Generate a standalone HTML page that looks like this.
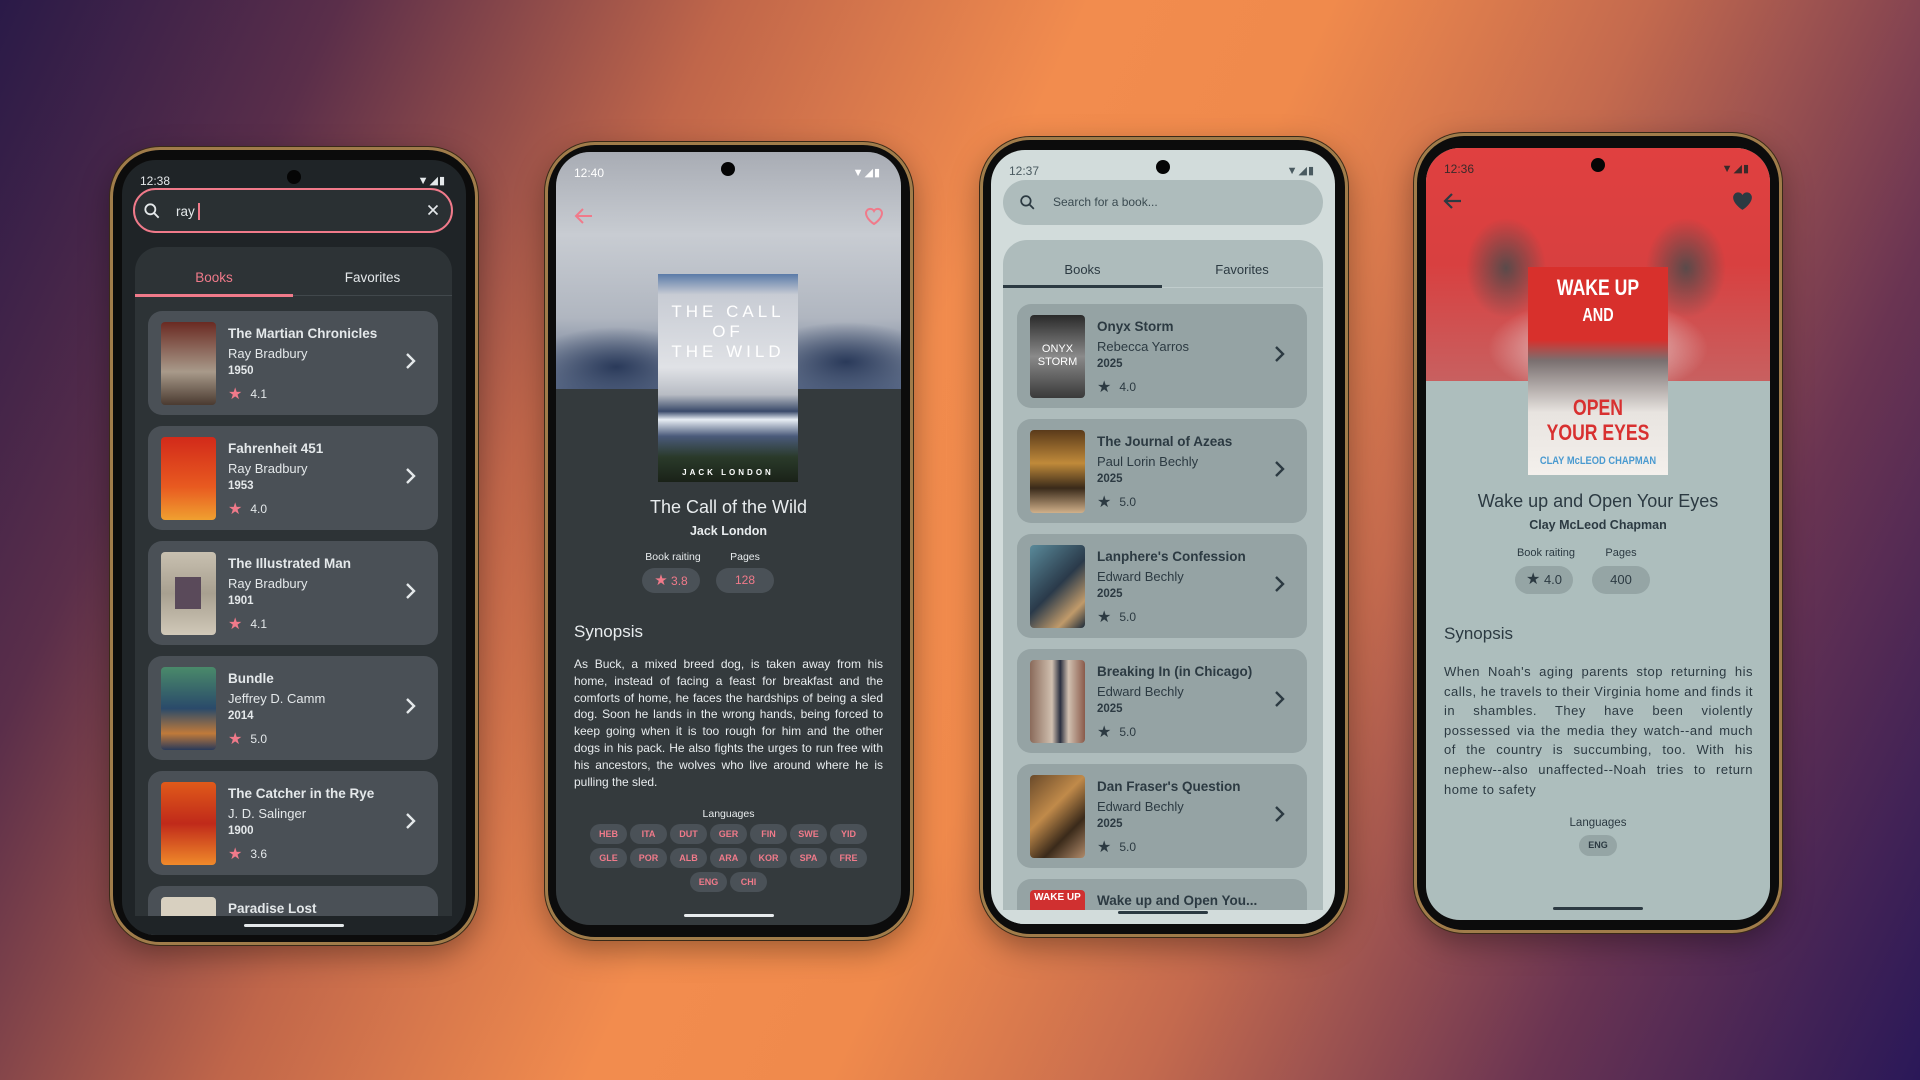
<!DOCTYPE html>
<html><head><meta charset="utf-8"><style>
*{margin:0;padding:0;box-sizing:border-box}
body{width:1920px;height:1080px;overflow:hidden;position:relative;font-family:"Liberation Sans",sans-serif;
background:linear-gradient(115deg,#2a1a48 0%,#5a2e4a 14%,#c0664a 30%,#f28c4e 45%,#f08a4c 55%,#c46a4e 68%,#6a3452 84%,#2a1858 100%);}
.frame{position:absolute;border-radius:50px;background:#0c0c0c;border:3px solid #a07c4a;box-shadow:0 0 0 1px #3a2a18,0 10px 30px rgba(0,0,0,.35)}
.scr{position:absolute;border-radius:34px;overflow:hidden}
.a{position:absolute}
.cam{position:absolute;width:14px;height:14px;border-radius:50%;background:#050505;left:165px;top:10px}
.st{position:absolute;top:14px;left:18px;font-size:12px}
.sti{position:absolute;top:14px;right:20px;font-size:11px;letter-spacing:1px}
.card{position:absolute;left:26px;width:290px;height:104px;border-radius:14px}
.cov{position:absolute;left:13px;top:11px;width:55px;height:83px;border-radius:4px;overflow:hidden}
.t1{position:absolute;left:80px;top:15px;font-size:13.5px;font-weight:bold;white-space:nowrap}
.t2{position:absolute;left:80px;top:35px;font-size:13px;white-space:nowrap}
.t3{position:absolute;left:80px;top:54px;font-size:11.5px;font-weight:bold}
.t4{position:absolute;left:80px;top:72px;font-size:12px}
.t4 b{font-size:16px;font-weight:normal;margin-right:8px;position:relative;top:1px}
.chev{position:absolute;left:250px;top:38px;width:24px;height:24px}
.home{position:absolute;bottom:8px;left:122px;width:100px;height:3px;border-radius:2px}
.chip{display:inline-block;width:37px;height:20px;border-radius:10px;font-size:9px;font-weight:bold;text-align:center;line-height:20px;margin:2px 1.5px}
.syn{position:absolute;left:18px;width:309px;font-size:12px;line-height:16.8px;text-align:justify}
</style></head><body>

<!-- PHONE 1 -->
<div class="frame" style="left:110px;top:147px;width:368px;height:798px"></div>
<div class="scr" style="left:122px;top:160px;width:344px;height:775px;background:#1f2427;color:#e4e8ea">
 <div class="cam"></div>
 <div class="st">12:38</div><div class="sti">▼◢▮</div>
 <div class="a" style="left:11px;top:28px;width:320px;height:45px;border:2px solid #f07a8a;border-radius:23px;background:#2a3033"></div>
 <svg class="a" style="left:20px;top:41px" width="20" height="20" viewBox="0 0 24 24"><circle cx="10" cy="10" r="6" stroke="#e4e8ea" stroke-width="2.2" fill="none"/><path d="M14.5 14.5L20 20" stroke="#e4e8ea" stroke-width="2.2"/></svg>
 <div class="a" style="left:54px;top:43px;font-size:13.5px">ray<span style="display:inline-block;width:2px;height:17px;background:#f07a8a;vertical-align:-4px;margin-left:3px"></span></div>
 <svg class="a" style="left:302px;top:41px" width="18" height="18" viewBox="0 0 24 24"><path d="M6 6L18 18M18 6L6 18" stroke="#e4e8ea" stroke-width="2.2"/></svg>
 <div class="a" style="left:13px;top:87px;width:317px;height:720px;background:#2d3336;border-radius:24px"></div>
 <div class="a" style="left:13px;top:110px;width:158px;text-align:center;font-size:13.5px;color:#f07a8a">Books</div>
 <div class="a" style="left:171px;top:110px;width:159px;text-align:center;font-size:13.5px">Favorites</div>
 <div class="a" style="left:13px;top:135px;width:317px;height:1px;background:#41484c"></div>
 <div class="a" style="left:13px;top:134px;width:158px;height:3px;background:#f07a8a"></div>

 <div class="card" style="top:151px;background:#4a5056"><div class="cov" style="background:linear-gradient(#6a2a22,#a89a8a 60%,#4a3a30)"></div><div class="t1">The Martian Chronicles</div><div class="t2">Ray Bradbury</div><div class="t3">1950</div><div class="t4"><b style="color:#f07a8a">★</b>4.1</div><svg class="chev" viewBox="0 0 24 24"><path d="M9 5l7 7-7 7" stroke="#e4e8ea" stroke-width="2.4" fill="none"/></svg></div>
 <div class="card" style="top:266px;background:#4a5056"><div class="cov" style="background:linear-gradient(#d22a1a,#e85a20 60%,#f0a030)"></div><div class="t1">Fahrenheit 451</div><div class="t2">Ray Bradbury</div><div class="t3">1953</div><div class="t4"><b style="color:#f07a8a">★</b>4.0</div><svg class="chev" viewBox="0 0 24 24"><path d="M9 5l7 7-7 7" stroke="#e4e8ea" stroke-width="2.4" fill="none"/></svg></div>
 <div class="card" style="top:381px;background:#4a5056"><div class="cov" style="background:linear-gradient(#c8c0b0,#a8a090 50%,#d0c8b8)"><div style="margin:25px 14px;width:26px;height:32px;background:#5a4a5a"></div></div><div class="t1">The Illustrated Man</div><div class="t2">Ray Bradbury</div><div class="t3">1901</div><div class="t4"><b style="color:#f07a8a">★</b>4.1</div><svg class="chev" viewBox="0 0 24 24"><path d="M9 5l7 7-7 7" stroke="#e4e8ea" stroke-width="2.4" fill="none"/></svg></div>
 <div class="card" style="top:496px;background:#4a5056"><div class="cov" style="background:linear-gradient(#4a8a6a,#2a4a6a 50%,#c07a3a 80%,#2a3a5a)"></div><div class="t1">Bundle</div><div class="t2">Jeffrey D. Camm</div><div class="t3">2014</div><div class="t4"><b style="color:#f07a8a">★</b>5.0</div><svg class="chev" viewBox="0 0 24 24"><path d="M9 5l7 7-7 7" stroke="#e4e8ea" stroke-width="2.4" fill="none"/></svg></div>
 <div class="card" style="top:611px;background:#4a5056"><div class="cov" style="background:linear-gradient(#e05a1a,#c02a1a 50%,#f08a2a)"></div><div class="t1">The Catcher in the Rye</div><div class="t2">J. D. Salinger</div><div class="t3">1900</div><div class="t4"><b style="color:#f07a8a">★</b>3.6</div><svg class="chev" viewBox="0 0 24 24"><path d="M9 5l7 7-7 7" stroke="#e4e8ea" stroke-width="2.4" fill="none"/></svg></div>
 <div class="card" style="top:726px;background:#4a5056"><div class="cov" style="background:#d8d0c0"></div><div class="t1">Paradise Lost</div></div>
 <div class="a" style="left:0;top:756px;width:344px;height:20px;background:#1f2427"></div>
 <div class="home" style="background:#e4e8ea"></div>
</div>

<!-- PHONE 2 -->
<div class="frame" style="left:545px;top:142px;width:368px;height:798px"></div>
<div class="scr" style="left:556px;top:152px;width:345px;height:773px;background:#343a3d;color:#e8ecee">
 <div class="a" style="left:0;top:0;width:345px;height:237px;background:radial-gradient(ellipse 90px 40px at 60px 215px,#2a3a5a,transparent),radial-gradient(ellipse 90px 40px at 290px 210px,#2a3a5a,transparent),linear-gradient(#a8acb4,#c8ccd2 35%,#b0b6c0 70%,#5a6a88)"></div>
 <div class="cam"></div>
 <div class="st" style="color:#fff">12:40</div><div class="sti" style="color:#fff">▼◢▮</div>
 <svg class="a" style="left:16px;top:52px" width="24" height="24" viewBox="0 0 24 24"><path d="M20 12H5M11 5l-7 7 7 7" stroke="#f07a8a" stroke-width="2" fill="none"/></svg>
 <svg class="a" style="left:306px;top:52px" width="24" height="24" viewBox="0 0 24 24"><path d="M12 20s-8-5-8-11a4.3 4.3 0 0 1 8-2 4.3 4.3 0 0 1 8 2c0 6-8 11-8 11z" stroke="#f07a8a" stroke-width="2" fill="none"/></svg>
 <div class="a" style="left:102px;top:122px;width:140px;height:208px;background:linear-gradient(#5a7aa8 0%,#c8ccd4 10%,#e0e2e6 45%,#b8bcc4 58%,#3a4a6a 66%,#e8eef4 70%,#4a5a7a 78%,#2a3a2a 88%,#1a2218 100%)">
  <div style="position:absolute;top:28px;width:140px;text-align:center;color:#fff;font-size:17px;letter-spacing:4px;line-height:20px">THE CALL<br>OF<br>THE WILD</div>
  <div style="position:absolute;top:194px;width:140px;text-align:center;color:#fff;font-size:8px;font-weight:bold;letter-spacing:3px">JACK LONDON</div></div>
 <div class="a" style="left:0;top:345px;width:345px;text-align:center;font-size:18px">The Call of the Wild</div>
 <div class="a" style="left:0;top:372px;width:345px;text-align:center;font-size:12.5px;font-weight:bold">Jack London</div>
 <div class="a" style="left:84px;top:399px;width:66px;text-align:center;font-size:10.5px">Book raiting</div>
 <div class="a" style="left:158px;top:399px;width:62px;text-align:center;font-size:10.5px">Pages</div>
 <div class="a" style="left:86px;top:416px;width:58px;height:25px;border-radius:13px;background:#4a5157;color:#f07a8a;font-size:12px;text-align:center;line-height:25px"><span style="font-size:15px">★</span> 3.8</div>
 <div class="a" style="left:160px;top:416px;width:58px;height:25px;border-radius:13px;background:#4a5157;color:#f07a8a;font-size:12px;text-align:center;line-height:25px">128</div>
 <div class="a" style="left:18px;top:470px;font-size:17px">Synopsis</div>
 <div class="syn" style="top:504px">As Buck, a mixed breed dog, is taken away from his home, instead of facing a feast for breakfast and the comforts of home, he faces the hardships of being a sled dog. Soon he lands in the wrong hands, being forced to keep going when it is too rough for him and the other dogs in his pack. He also fights the urges to run free with his ancestors, the wolves who live around where he is pulling the sled.</div>
 <div class="a" style="left:0;top:656px;width:345px;text-align:center;font-size:10.5px">Languages</div>
 <div class="a" style="left:25px;top:670px;width:295px;text-align:center;color:#f07a8a;line-height:0">
  <span class="chip" style="background:#4a5157">HEB</span><span class="chip" style="background:#4a5157">ITA</span><span class="chip" style="background:#4a5157">DUT</span><span class="chip" style="background:#4a5157">GER</span><span class="chip" style="background:#4a5157">FIN</span><span class="chip" style="background:#4a5157">SWE</span><span class="chip" style="background:#4a5157">YID</span><br>
  <span class="chip" style="background:#4a5157">GLE</span><span class="chip" style="background:#4a5157">POR</span><span class="chip" style="background:#4a5157">ALB</span><span class="chip" style="background:#4a5157">ARA</span><span class="chip" style="background:#4a5157">KOR</span><span class="chip" style="background:#4a5157">SPA</span><span class="chip" style="background:#4a5157">FRE</span><br>
  <span class="chip" style="background:#4a5157">ENG</span><span class="chip" style="background:#4a5157">CHI</span></div>
 <div class="home" style="background:#e8ecee;width:90px;left:128px"></div>
</div>

<!-- PHONE 3 -->
<div class="frame" style="left:980px;top:137px;width:368px;height:800px"></div>
<div class="scr" style="left:991px;top:150px;width:344px;height:774px;background:#d2dcdb;color:#2c3a42">
 <div class="cam"></div>
 <div class="st" style="color:#4a5a60">12:37</div><div class="sti" style="color:#4a5a60">▼◢▮</div>
 <div class="a" style="left:12px;top:30px;width:320px;height:45px;border-radius:23px;background:#aebcbc"></div>
 <svg class="a" style="left:27px;top:43px" width="19" height="19" viewBox="0 0 24 24"><circle cx="10" cy="10" r="6" stroke="#2c3a42" stroke-width="2.2" fill="none"/><path d="M14.5 14.5L20 20" stroke="#2c3a42" stroke-width="2.2"/></svg>
 <div class="a" style="left:62px;top:45px;font-size:12px;color:#3a4a50">Search for a book...</div>
 <div class="a" style="left:12px;top:90px;width:320px;height:720px;background:#aebcbc;border-radius:24px"></div>
 <div class="a" style="left:12px;top:112px;width:159px;text-align:center;font-size:13px">Books</div>
 <div class="a" style="left:171px;top:112px;width:160px;text-align:center;font-size:13px">Favorites</div>
 <div class="a" style="left:12px;top:137px;width:320px;height:1px;background:#c0cccc"></div>
 <div class="a" style="left:12px;top:135px;width:159px;height:3px;background:#2c3a42"></div>
 <div class="card" style="top:154px;background:#95a3a4"><div class="cov" style="background:linear-gradient(#2a2a2a,#8a8a8a 50%,#3a3a3a)"><div style="color:#fff;font-size:11px;text-align:center;margin-top:28px;line-height:13px">ONYX<br>STORM</div></div><div class="t1">Onyx Storm</div><div class="t2">Rebecca Yarros</div><div class="t3">2025</div><div class="t4"><b>★</b>4.0</div><svg class="chev" viewBox="0 0 24 24"><path d="M9 5l7 7-7 7" stroke="#2c3a42" stroke-width="2.4" fill="none"/></svg></div>
 <div class="card" style="top:269px;background:#95a3a4"><div class="cov" style="background:linear-gradient(#5a3a1a,#c08a3a 40%,#3a2a1a 70%,#d0b08a)"></div><div class="t1">The Journal of Azeas</div><div class="t2">Paul Lorin Bechly</div><div class="t3">2025</div><div class="t4"><b>★</b>5.0</div><svg class="chev" viewBox="0 0 24 24"><path d="M9 5l7 7-7 7" stroke="#2c3a42" stroke-width="2.4" fill="none"/></svg></div>
 <div class="card" style="top:384px;background:#95a3a4"><div class="cov" style="background:linear-gradient(135deg,#5a8a9a,#2a3a4a 50%,#c09a6a 80%,#1a2a3a)"></div><div class="t1">Lanphere's Confession</div><div class="t2">Edward Bechly</div><div class="t3">2025</div><div class="t4"><b>★</b>5.0</div><svg class="chev" viewBox="0 0 24 24"><path d="M9 5l7 7-7 7" stroke="#2c3a42" stroke-width="2.4" fill="none"/></svg></div>
 <div class="card" style="top:499px;background:#95a3a4"><div class="cov" style="background:linear-gradient(90deg,#8a6a5a,#d0c0b0 40%,#2a3040 55%,#d0c0b0 70%,#8a5a4a)"></div><div class="t1">Breaking In (in Chicago)</div><div class="t2">Edward Bechly</div><div class="t3">2025</div><div class="t4"><b>★</b>5.0</div><svg class="chev" viewBox="0 0 24 24"><path d="M9 5l7 7-7 7" stroke="#2c3a42" stroke-width="2.4" fill="none"/></svg></div>
 <div class="card" style="top:614px;background:#95a3a4"><div class="cov" style="background:linear-gradient(135deg,#6a4a2a,#c08a4a 40%,#3a2a1a 70%,#b08a6a)"></div><div class="t1">Dan Fraser's Question</div><div class="t2">Edward Bechly</div><div class="t3">2025</div><div class="t4"><b>★</b>5.0</div><svg class="chev" viewBox="0 0 24 24"><path d="M9 5l7 7-7 7" stroke="#2c3a42" stroke-width="2.4" fill="none"/></svg></div>
 <div class="card" style="top:729px;background:#95a3a4"><div class="cov" style="background:#d03030;color:#fff;font-size:10px;text-align:center;font-weight:bold;padding-top:2px">WAKE UP</div><div class="t1" style="top:14px">Wake up and Open You...</div></div>
 <div class="a" style="left:0;top:760px;width:344px;height:20px;background:#d2dcdb"></div>
 <div class="home" style="background:#2c3a42;width:90px;left:127px;bottom:10px"></div>
</div>

<!-- PHONE 4 -->
<div class="frame" style="left:1414px;top:133px;width:368px;height:800px"></div>
<div class="scr" style="left:1426px;top:148px;width:344px;height:772px;background:#adbebd;color:#2c3a42">
 <div class="a" style="left:0;top:0;width:344px;height:233px;background:radial-gradient(ellipse 110px 50px at 172px 200px,#f0eeee,transparent),radial-gradient(ellipse 40px 50px at 80px 120px,#5a4a4a,transparent),radial-gradient(ellipse 40px 50px at 260px 120px,#5a4a4a,transparent),linear-gradient(#e04040,#d84040 50%,#c86060)"></div>
 <div class="cam"></div>
 <div class="st" style="color:#3a2a2a">12:36</div><div class="sti" style="color:#3a2a2a">▼◢▮</div>
 <svg class="a" style="left:15px;top:41px" width="24" height="24" viewBox="0 0 24 24"><path d="M20 12H5M11 5l-7 7 7 7" stroke="#2c3a42" stroke-width="2.2" fill="none"/></svg>
 <svg class="a" style="left:304px;top:40px" width="25" height="25" viewBox="0 0 24 24"><path d="M12 21s-9-5.5-9-12a4.8 4.8 0 0 1 9-2.3A4.8 4.8 0 0 1 21 9c0 6.5-9 12-9 12z" fill="#2c3a42"/></svg>
 <div class="a" style="left:102px;top:119px;width:140px;height:208px;background:linear-gradient(#d8302c 0%,#d8302c 35%,#7a7070 45%,#e8e4e0 70%,#f4f0ec 100%)">
  <div style="position:absolute;top:8px;width:140px;text-align:center;color:#fff;font-size:22px;font-weight:bold;line-height:26px;transform:scaleX(.8)">WAKE UP<br><span style="font-size:18px">AND</span></div>
  <div style="position:absolute;top:128px;width:140px;text-align:center;color:#d83030;font-size:22px;font-weight:bold;line-height:25px;transform:scaleX(.8)">OPEN<br>YOUR EYES</div>
  <div style="position:absolute;top:188px;width:140px;text-align:center;color:#4a9ad0;font-size:11px;font-weight:bold;transform:scaleX(.85)">CLAY McLEOD CHAPMAN</div></div>
 <div class="a" style="left:0;top:343px;width:344px;text-align:center;font-size:18px">Wake up and Open Your Eyes</div>
 <div class="a" style="left:0;top:370px;width:344px;text-align:center;font-size:12.5px;font-weight:bold">Clay McLeod Chapman</div>
 <div class="a" style="left:82px;top:399px;width:76px;text-align:center;font-size:11px">Book raiting</div>
 <div class="a" style="left:164px;top:399px;width:62px;text-align:center;font-size:11px">Pages</div>
 <div class="a" style="left:89px;top:418px;width:58px;height:28px;border-radius:14px;background:#95a5a5;font-size:13px;text-align:center;line-height:28px"><span style="font-size:16px">★</span> 4.0</div>
 <div class="a" style="left:166px;top:418px;width:58px;height:28px;border-radius:14px;background:#95a5a5;font-size:13px;text-align:center;line-height:28px">400</div>
 <div class="a" style="left:18px;top:476px;font-size:17px">Synopsis</div>
 <div class="syn" style="top:514px;line-height:19.6px;font-size:13px;letter-spacing:0.5px">When Noah's aging parents stop returning his calls, he travels to their Virginia home and finds it in shambles. They have been violently possessed via the media they watch--and much of the country is succumbing, too. With his nephew--also unaffected--Noah tries to return home to safety</div>
 <div class="a" style="left:0;top:669px;width:344px;text-align:center;font-size:11.5px">Languages</div>
 <div class="a" style="left:153px;top:687px;width:38px;height:21px;border-radius:11px;background:#95a5a5;font-size:9px;font-weight:bold;text-align:center;line-height:21px">ENG</div>
 <div class="home" style="background:#2c3a42;width:90px;left:127px;bottom:10px"></div>
</div>
</body></html>
